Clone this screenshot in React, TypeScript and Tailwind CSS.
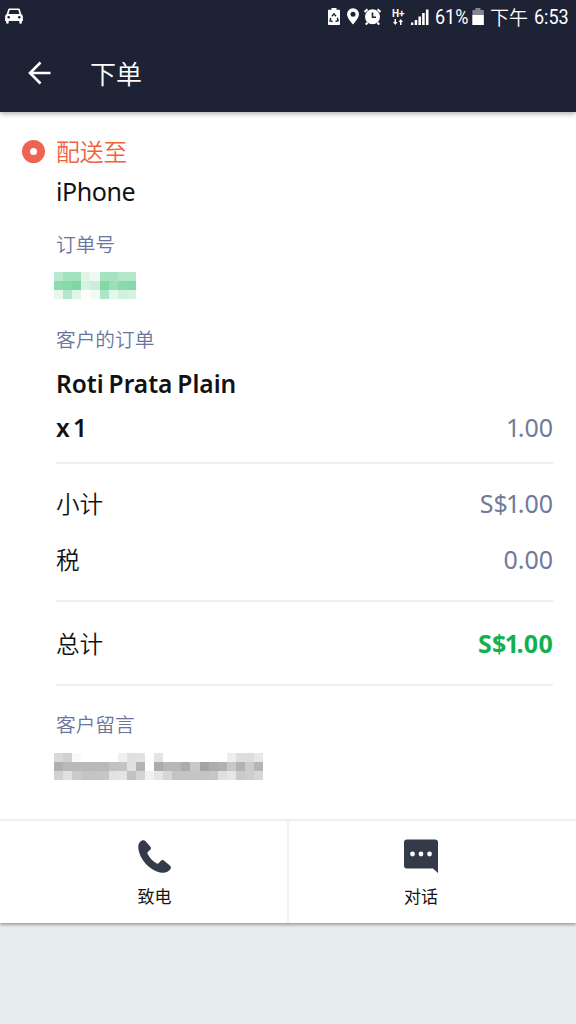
import type { ReactNode } from 'react'
import clsx from 'clsx'

// Hidden values are drawn as a grid of shaded cells
const ORDER_NUMBER_CELLS = [
  ['#b9e9cf', '#a3e2bf', '#a3e2bf', '#e0f5ea', '#eef9f3', '#a6e3c1', '#a6e3c1', '#b2e7ca', '#b2e7ca'],
  ['#8ddbae', '#86d9a9', '#7fd6a4', '#d6f2e3', '#cdeedd', '#84d8a8', '#9adfb8', '#8adaac', '#86d9a9'],
  ['#e6f7ee', '#b4e7cb', '#e0f5ea', '#fbfefc', '#f1faf5', '#aee5c7', '#e6f7ee', '#d0f0df', '#d6f2e3'],
]

const MESSAGE_CELLS = [
  ['#d9d9da', '#d1d1d2', '#fafafa', '#ffffff', '#ffffff', '#ffffff', '#ffffff', '#f0f0f1', '#e0e0e1', '#e1e1e2', '#ffffff', '#e4e4e5', '#ffffff', '#ffffff', '#ffffff', '#ffffff', '#ffffff', '#ffffff', '#ffffff', '#eeeeef', '#dededf', '#dddddf', '#e7e7e8'],
  ['#b0b0b2', '#bababc', '#b8b9bb', '#b8b9bb', '#b8b9bb', '#b8b9bb', '#c2c2c4', '#c4c4c6', '#e0e0e1', '#b4b4b6', '#ffffff', '#acacae', '#b6b7b9', '#b6b7b9', '#acacae', '#c8c8ca', '#a3a3a6', '#adadaf', '#b1b1b3', '#c8c8ca', '#b3b3b5', '#cbcbcd', '#b5b5b7'],
  ['#d1d1d2', '#e0e0e1', '#cbccce', '#c3c4c6', '#c3c4c6', '#c4c5c7', '#e2e2e3', '#e4e4e5', '#c2c2c4', '#d4d4d5', '#f1f1f2', '#e6e6e7', '#d6d6d7', '#c3c4c6', '#c3c4c6', '#c3c4c6', '#c3c4c6', '#c6c6c8', '#e0e0e1', '#e6e6e7', '#cacacc', '#cdcdcf', '#d7d7d8'],
]

function Mosaic({ rows, className }: { rows: string[][]; className: string }) {
  return (
    <div className={clsx('-ml-0.5 flex flex-col', className)}>
      {rows.map((cells, i) => (
        <div key={i} className="flex flex-1">
          {cells.map((color, j) => (
            <div key={j} className="flex-1" style={{ backgroundColor: color }} />
          ))}
        </div>
      ))}
    </div>
  )
}

function StatusBar() {
  return (
    <div className="flex h-[34px] items-center text-white">
      <svg className="mb-0.5 ml-[5px] h-4 w-[18px]" viewBox="0 0 18 16" fill="currentColor">
        <path
          fillRule="evenodd"
          d="M4.4.5h9.2c.6 0 1 .3 1.2.8L16.4 6.2c1 .5 1.5 1.3 1.5 2.4V13h-1v1.500a1.300 1.300 0 0 1-2.600 0V13H3.700v1.500a1.300 1.300 0 0 1-2.600 0V13h-1V8.600c0-1.100.5-1.900 1.500-2.400L3.200 1.300c.2-.5.6-.8 1.200-.8ZM4.700 2 3.500 6h11l-1.200-4H4.700ZM3.700 7.900a1.350 1.350 0 1 0 0 2.700 1.350 1.350 0 0 0 0-2.700Zm10.600 0a1.350 1.350 0 1 0 0 2.700 1.350 1.350 0 0 0 0-2.700Z"
        />
      </svg>

      <svg className="ml-auto h-[18px] w-3" viewBox="0 0 12 18" fill="currentColor">
        <path d="M3.500 0h5v1.800H11c.6 0 1 .4 1 1V16c0 .6-.4 1-1 1H1c-.6 0-1-.4-1-1V2.800c0-.6.4-1 1-1h2.500Z" />
        <path d="M4 8.200 6 5.800l2 2.400M9.300 9.800l.9 2.800-2.700.9M4.600 13.500 2 13l.7-3.200" fill="none" stroke="#1e2235" strokeWidth="1.4" />
      </svg>
      <svg className="ml-[7px] h-[18px] w-3" viewBox="0 0 12 18" fill="currentColor">
        <path fillRule="evenodd" d="M6 .3a5.900 5.900 0 0 1 6 5.900C12 10 6 16.500 6 16.500S0 10 0 6.200A5.900 5.900 0 0 1 6 .3Zm0 3.400a2.500 2.500 0 1 0 0 5 2.500 2.500 0 0 0 0-5Z" />
      </svg>
      <svg className="ml-[5px] h-[18px] w-[17px]" viewBox="0 0 17 18" fill="currentColor">
        <circle cx="8.5" cy="8.8" r="7.5" />
        <path d="m.5 4 3-2.700M16.500 4l-3-2.700M3.600 14.500l-1.800 2.200M13.400 14.500l1.800 2.200" stroke="currentColor" strokeWidth="2" />
        <path d="M8.500 4.500v4.700H12" fill="none" stroke="#1e2235" strokeWidth="1.6" />
      </svg>

      {/* Mobile data indicator */}
      <div className="ml-[11px] flex h-5 w-[14px] flex-col pt-0.5 font-[Roboto]">
        <span className="text-[10px] leading-[10px] font-bold">H+</span>
        <svg className="h-[7px] w-3" viewBox="0 0 12 7" fill="currentColor">
          <path d="M2.500 0H4v3h1.500L3.250 6 1 3h1.500ZM8 6h1.500V3H11L8.750 0 6.500 3H8Z" />
        </svg>
      </div>
      <svg className="ml-[5px] h-[17px] w-[18px]" viewBox="0 0 18 17" fill="currentColor">
        <path d="M0 13.500h2.300V16H0ZM3.700 11h2.500v5H3.700ZM7.400 7.500H10V16H7.400ZM11.100 4h2.600v12h-2.600ZM14.900.5h2.600V16h-2.600Z" />
      </svg>
      <span className="ml-[6px] w-[35px] origin-left scale-x-90 font-[Roboto] text-[20px] leading-6 whitespace-nowrap">61%</span>
      <svg className="ml-[2px] h-[18px] w-3" viewBox="0 0 12 18">
        <path d="M3.500 0h5v2H11c.5 0 .8.3.8.8V17H.4V2.800c0-.5.3-.8.8-.8h2.300Z" fill="#85868d" />
        <path d="M.4 7h11.400v10H.4Z" fill="#fff" />
      </svg>
      <span className="ml-[6px] font-['Noto_Sans_CJK_SC',sans-serif] text-[19px] leading-6 font-[350]">下午</span>
      <span className="mr-[7px] ml-[6px] w-[35px] origin-left scale-x-90 font-[Roboto] text-[20px] leading-6">6:53</span>
    </div>
  )
}

function Amount({ value, className }: { value: string; className?: string }) {
  // The figure one is set tighter than the other digits
  return (
    <span className={clsx('text-[25px]', className ?? 'text-[#707b9b]')}>
      {value.split('1').map((part, i) => (
        <span key={i}>
          {i > 0 && <span className="-ml-[2px] tracking-[-2.5px]">1</span>}
          {part}
        </span>
      ))}
    </span>
  )
}

function Row({ label, children, className }: { label: string; children: ReactNode; className?: string }) {
  return (
    <div className={clsx('flex h-14 items-center justify-between', className)}>
      <span className="pt-0.5 text-[23.6px] font-[350]">{label}</span>
      {children}
    </div>
  )
}

function Divider({ className }: { className?: string }) {
  return <div className={clsx('h-0.5 bg-[#eceff0]', className)} />
}

function SectionLabel({ children, className }: { children: ReactNode; className?: string }) {
  return (
    <div className={clsx('h-[30px] text-[19.7px] leading-[30px] font-[350] text-[#69779c]', className)}>{children}</div>
  )
}

function ActionButton({ label, icon, className }: { label: string; icon: ReactNode; className?: string }) {
  return (
    <button className={clsx('flex flex-col items-center pt-[18px]', className)}>
      {icon}
      <span className="mt-[10px] text-[17px] leading-6 text-[#151515]">{label}</span>
    </button>
  )
}

export default function App() {
  return (
    <div className="flex h-screen flex-col bg-[#e8edf0] font-['Noto_Sans','Noto_Sans_CJK_SC',sans-serif] text-[#111214]">
      <header className="relative z-10 h-28 shrink-0 bg-[#1e2235] shadow-[0_2px_5px_rgba(0,0,0,0.3)]">
        <StatusBar />
        <div className="flex h-[78px] items-center pl-7 text-white">
          <svg className="h-6 w-6" viewBox="0 0 24 24" fill="none" stroke="currentColor" strokeWidth="2.6">
            <path d="M22.500 12H2M12.500 1.500 2 12l10.500 10.500" />
          </svg>
          <h1 className="ml-[38px] pt-0.5 text-[26px] leading-8 font-[350]">下单</h1>
        </div>
      </header>

      <main className="flex h-[811px] shrink-0 flex-col bg-white shadow-[0_2px_3px_rgba(0,0,0,0.32)]">
        <div className="flex-1 pt-5 pr-[23px] pl-14">
          <div className="-ml-[34px] flex h-10 items-center">
            <span className="mb-0.5 flex h-[23px] w-[23px] items-center justify-center rounded-full bg-[#ee6352]">
              <span className="h-[7px] w-[7px] rounded-full bg-white" />
            </span>
            <span className="ml-[11px] pt-0.5 text-[23.8px] font-[350] text-[#f1613c]">配送至</span>
          </div>
          <div className="flex h-10 items-center text-[25px] tracking-[-0.4px]">iPhone</div>

          <SectionLabel className="mt-[18px]">订单号</SectionLabel>
          <Mosaic rows={ORDER_NUMBER_CELLS} className="mt-3 h-[27px] w-[82px]" />

          <SectionLabel className="mt-[26px]">客户的订单</SectionLabel>
          <div className="mt-[7px] flex h-11 items-center text-[24.5px] font-semibold [word-spacing:-1.5px]">Roti Prata Plain</div>
          <div className="flex h-11 items-center justify-between">
            <span className="text-[24.5px] font-semibold [word-spacing:-3px]">x 1</span>
            <Amount value="1.00" />
          </div>

          <Divider className="mt-3" />
          <Row label="小计" className="mt-3">
            <Amount value="S$1.00" />
          </Row>
          <Row label="税">
            <Amount value="0.00" />
          </Row>
          <Divider className="mt-3" />
          <Row label="总计" className="mt-[14px]">
            <Amount value="S$1.00" className="font-bold tracking-[0.3px] text-[#12b150]" />
          </Row>
          <Divider className="mt-3" />

          <SectionLabel className="mt-6">客户留言</SectionLabel>
          <Mosaic rows={MESSAGE_CELLS} className="mt-[13px] h-[27px] w-[209px]" />
        </div>

        <div className="flex h-[104px] border-t-2 border-[#eceff0]">
          <ActionButton
            label="致电"
            className="w-[287px] pl-[22px]"
            icon={
              <svg className="h-[36px] w-[36px]" viewBox="0 0 36 36" fill="#343b48">
                <path d="M5 1.500C6.200.9 7.500 1.100 8.400 2.100l5 5.700c.8.9.8 1.800.1 2.700l-2.700 2.400c-.5.5-.6 1.100-.3 1.800 1.900 4 5 7.300 9.300 9.800.7.4 1.300.3 1.800-.2l2.500-2.700c.8-.8 1.800-.9 2.700-.2l6 5.200c1.200 1.100 1.500 2.300.7 3.500-2 3.200-5.900 4.200-10.500 3.300C12.500 31.200 2.600 20.500 1.300 9.500.8 5.800 2.200 2.800 5 1.500Z" />
              </svg>
            }
          />
          <div className="w-0.5 bg-[#f0f3f4]" />
          <ActionButton
            label="对话"
            className="w-[287px] pr-[23px]"
            icon={
              <svg className="h-[36px] w-[34px]" viewBox="0 0 34 36">
                <path d="M3 .5h28a3 3 0 0 1 3 3V34l-5-4.500H3a3 3 0 0 1-3-3v-23a3 3 0 0 1 3-3Z" fill="#343b48" />
                <g fill="#fff">
                  <circle cx="8.5" cy="15" r="2.4" />
                  <circle cx="17" cy="15" r="2.4" />
                  <circle cx="25.5" cy="15" r="2.4" />
                </g>
              </svg>
            }
          />
        </div>
      </main>
    </div>
  )
}
